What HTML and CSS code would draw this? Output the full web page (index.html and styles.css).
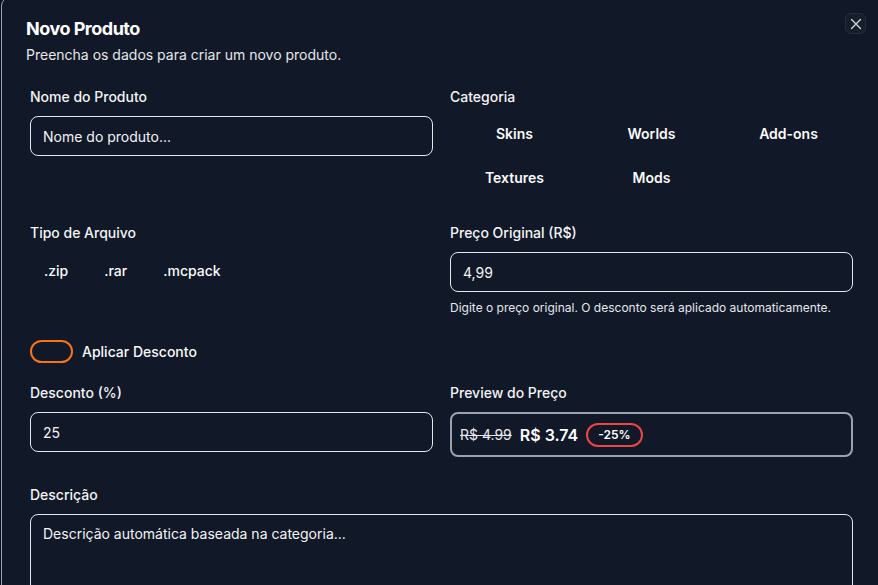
FILE: index.html
```html
<!DOCTYPE html>
<html lang="pt-BR">
<head>
<meta charset="utf-8">
<title>Novo Produto</title>
<link rel="stylesheet" href="styles.css">
</head>
<body>
<div class="modal">
  <button class="close" aria-label="Fechar">
    <svg width="12" height="12" viewBox="0 0 12 12" fill="none" stroke="#d1d5db" stroke-width="1.4" stroke-linecap="round"><path d="M1.5 1.5l9 9M10.5 1.5l-9 9"/></svg>
  </button>
  <header class="head">
    <h2 class="title">Novo Produto</h2>
    <p class="subtitle">Preencha os dados para criar um novo produto.</p>
  </header>
  <form class="form">
    <div class="row row-1">
      <div class="field">
        <label class="label">Nome do Produto</label>
        <div class="input">Nome do produto...</div>
      </div>
      <div class="field">
        <label class="label">Categoria</label>
        <div class="cats">
          <span class="opt">Skins</span>
          <span class="opt">Worlds</span>
          <span class="opt">Add-ons</span>
          <span class="opt">Textures</span>
          <span class="opt">Mods</span>
        </div>
      </div>
    </div>
    <div class="row row-2">
      <div class="field">
        <label class="label">Tipo de Arquivo</label>
        <div class="types">
          <span class="type">.zip</span>
          <span class="type">.rar</span>
          <span class="type">.mcpack</span>
        </div>
      </div>
      <div class="field">
        <label class="label">Preço Original (R$)</label>
        <div class="input">4,99</div>
        <p class="hint">Digite o preço original. O desconto será aplicado automaticamente.</p>
      </div>
    </div>
    <div class="toggle-row">
      <span class="switch"></span>
      <span class="toggle-label">Aplicar Desconto</span>
    </div>
    <div class="row row-3">
      <div class="field">
        <label class="label">Desconto (%)</label>
        <div class="input">25</div>
      </div>
      <div class="field">
        <label class="label">Preview do Preço</label>
        <div class="preview">
          <span class="old">R$ 4.99</span>
          <span class="new">R$ 3.74</span>
          <span class="badge">-25%</span>
        </div>
      </div>
    </div>
    <div class="field desc">
      <label class="label">Descrição</label>
      <div class="textarea">Descrição automática baseada na categoria...</div>
    </div>
  </form>
</div>
</body>
</html>
```
FILE: styles.css
```css
* { box-sizing: border-box; }
html, body { margin: 0; padding: 0; }
body {
  background: #0b0f19;
  font-family: Inter, "Noto Sans", sans-serif;
  color: #f9fafb;
  overflow: hidden;
  height: 585px;
}
.modal {
  position: relative;
  margin: -4px 0 0 1px;
  width: 880px;
  min-height: 700px;
  background: #111827;
  border: 1px solid #9ca3af;
  border-radius: 10px;
  padding: 18px 24px 24px 24px;
}
.close {
  position: absolute;
  top: 16px;
  right: 14px;
  width: 21px;
  height: 21px;
  border-radius: 6px;
  background: #161d2b;
  border: 1px solid #252c3a;
  display: flex;
  align-items: center;
  justify-content: center;
  padding: 0;
}
.head { display: flex; flex-direction: column; gap: 2px; }
.title {
  margin: 0;
  font-size: 18px;
  line-height: 28px;
  font-weight: 700;
  letter-spacing: -0.5px;
  color: #ffffff;
}
.subtitle {
  margin: 0;
  font-size: 14px;
  line-height: 20px;
  color: #e5e7eb;
}
.form {
  margin: 22px 0 0 4px;
  width: 823px;
  display: flex;
  flex-direction: column;
}
.row {
  display: grid;
  grid-template-columns: 403px 403px;
  column-gap: 17px;
}
.row-2 { margin-top: 29px; }
.row-3 { margin-top: 20px; }
.field { display: flex; flex-direction: column; }
.label {
  font-size: 14px;
  line-height: 20px;
  font-weight: 500;
  color: #f3f4f6;
  margin-bottom: 9px;
}
.input {
  height: 40px;
  border: 1px solid #e5e7eb;
  border-radius: 8px;
  padding: 0 12px;
  display: flex;
  align-items: center;
  font-size: 14px;
  color: #f3f4f6;
}
.cats {
  display: grid;
  grid-template-columns: repeat(3, 1fr);
  column-gap: 8px;
  row-gap: 10px;
}
.opt {
  height: 34px;
  display: flex;
  align-items: center;
  justify-content: center;
  font-size: 14px;
  font-weight: 600;
  color: #f9fafb;
}
.types {
  display: flex;
  gap: 8px;
  margin-top: 1px;
}
.type {
  height: 34px;
  padding: 0 14px;
  display: flex;
  align-items: center;
  font-size: 14px;
  font-weight: 500;
  color: #f9fafb;
}
.hint {
  margin: 8px 0 0;
  font-size: 12px;
  line-height: 16px;
  color: #e5e7eb;
}
.toggle-row {
  margin-top: 24px;
  display: flex;
  align-items: center;
  gap: 9px;
}
.switch {
  width: 43px;
  height: 23px;
  border: 2px solid #f97316;
  border-radius: 999px;
}
.toggle-label {
  font-size: 14px;
  font-weight: 500;
  color: #f9fafb;
}
.preview {
  height: 45px;
  border: 2px solid #9ca3af;
  border-radius: 8px;
  padding: 0 8px;
  display: flex;
  align-items: center;
  gap: 8px;
}
.old {
  font-size: 14px;
  color: #e5e7eb;
  text-decoration: line-through;
}
.new {
  font-size: 16px;
  font-weight: 600;
  color: #ffffff;
}
.badge {
  font-size: 12px;
  font-weight: 600;
  line-height: 16px;
  padding: 2px 10px;
  border: 2px solid #ef4444;
  border-radius: 999px;
  color: #ffffff;
}
.desc { margin-top: 28px; }
.textarea {
  height: 120px;
  border: 1px solid #e5e7eb;
  border-radius: 8px;
  padding: 9px 12px;
  font-size: 14px;
  line-height: 20px;
  color: #f3f4f6;
}
```
